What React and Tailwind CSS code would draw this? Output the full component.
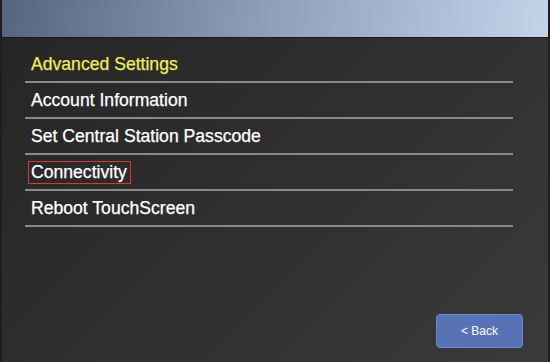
import React from 'react';

const MenuScreen = () => {
  const items = [
    { label: 'Advanced Settings', active: true },
    { label: 'Account Information' },
    { label: 'Set Central Station Passcode' },
    { label: 'Connectivity', boxed: true },
    { label: 'Reboot TouchScreen' },
  ];

  return (
    <div
      className="w-[550px] h-[362px] flex flex-col overflow-hidden border-x-2 border-[#1e1e1e] bg-[linear-gradient(135deg,#252525_0%,#2e2e2e_45%,#3a3a3a_100%)]"
      style={{ fontFamily: '"Liberation Sans", Arial, sans-serif' }}
    >
      {/* Title bar */}
      <div className="h-[38px] shrink-0 bg-[linear-gradient(100deg,#56657f_0%,#8a9bb5_45%,#c2d4ea_100%)] border-b border-[#1a1a1a]" />

      {/* Menu list */}
      <div className="flex flex-col pl-[23px] pr-[35px] pt-[9px]">
        {items.map((item) => (
          <div
            key={item.label}
            className="h-[36px] flex items-center border-b-2 border-[#8a8a8a]"
          >
            <div
              className={
                'h-[23px] flex items-center ' +
                (item.boxed ? 'border border-[#e0352f] pl-[2px] pr-[3px] ml-[3px] mt-[1px]' : 'ml-[6px] mt-[1px]')
              }
            >
              <span
                className={
                  'text-[17.6px] leading-none [-webkit-text-stroke:0.25px_currentColor] ' +
                  (item.active ? 'text-[#eded5a]' : 'text-white')
                }
              >
                {item.label}
              </span>
            </div>
          </div>
        ))}
      </div>

      <div className="flex-1" />

      {/* Back button */}
      <div className="flex justify-end pr-[25px] pb-[14px]">
        <button className="w-[87px] h-[34px] rounded-[4px] bg-[#5872b6] border border-[#7088c8] text-white text-[12px] flex items-center justify-center">
          &lt; Back
        </button>
      </div>
    </div>
  );
};

export default MenuScreen;
